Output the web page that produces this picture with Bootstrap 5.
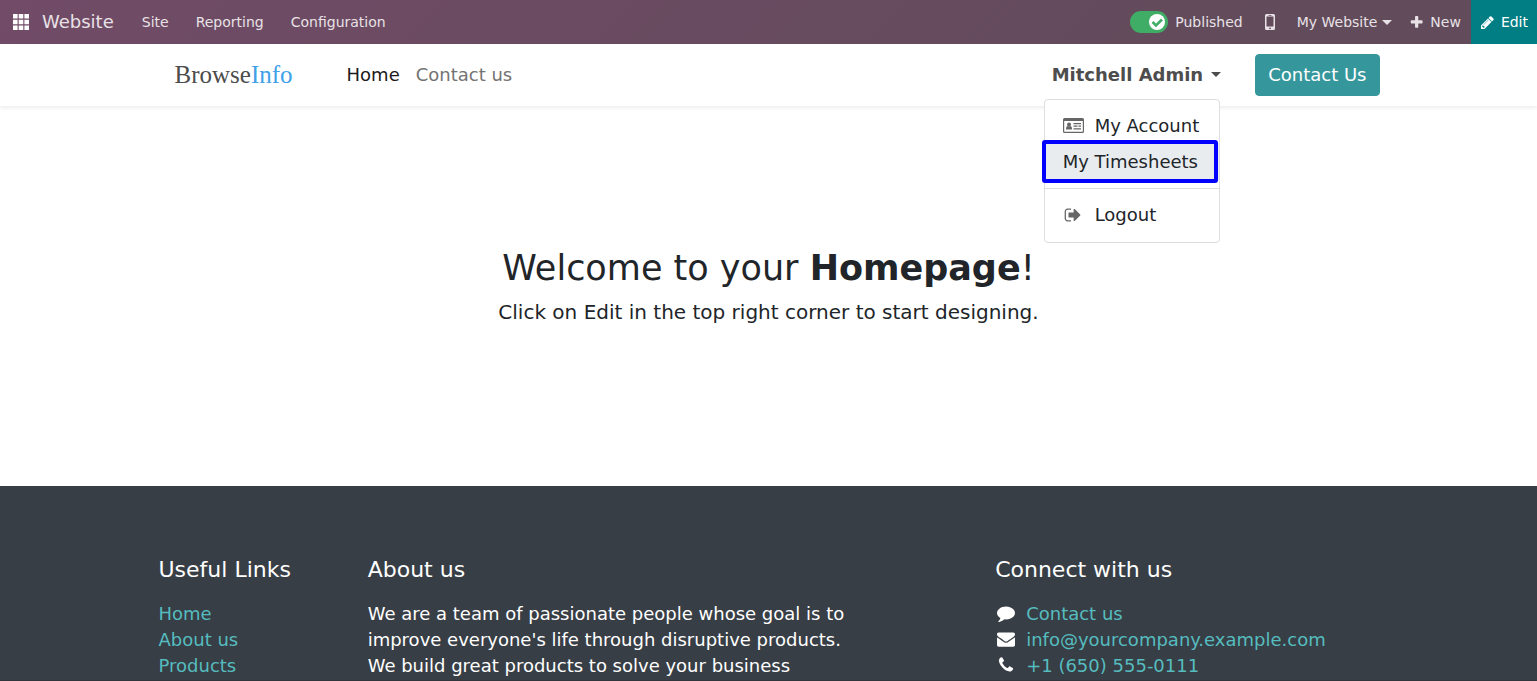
<!DOCTYPE html>
<html lang="en">
<head>
<meta charset="utf-8">
<meta name="viewport" content="width=device-width, initial-scale=1">
<title>Home | My Website</title>
<link href="https://cdn.jsdelivr.net/npm/bootstrap@5.3.0/dist/css/bootstrap.min.css" rel="stylesheet">
<style>
  body { font-family: "DejaVu Sans", sans-serif; font-size: 18px; line-height: 27px; color: #212529; min-height: 100vh; }
  a { text-decoration: none; }
  .fa-icon { fill: currentColor; flex: none; display: block; }
  .site-container { max-width: 1254px; padding-left: 17px; padding-right: 16px; }

  /* Backend bar */
  .systray { height: 44px; padding-left: 13px; font-size: 14px; line-height: 20px; background: linear-gradient(135deg, #714b67, #624b5b 80%); color: #e8e2e6; }
  .systray a, .systray .bar-btn { color: inherit; background: none; border: 0; padding: 0; }
  .systray .app-name { font-size: 18px; margin: 0 28px 0 13px; }
  .systray .sections { gap: 27px; }
  .systray .tools { gap: 18px; }
  .systray .bar-btn { gap: 5px; }
  .systray .apps { color: #fff; }
  .systray .edit-btn { background: #017e84; color: #fff; padding: 0 9px 0 10px; margin-left: -8px; }
  .form-switch .publish-toggle {
    width: 38px; height: 22px; margin: 0 7px 0 0; border: 0; box-shadow: none;
    --knob: url("data:image/svg+xml,%3csvg xmlns='http://www.w3.org/2000/svg' viewBox='0 0 22 22'%3e%3ccircle cx='11' cy='11' r='8' fill='%23fff'/%3e%3cpath d='M6.500 11l3.500 3.500 6-6' fill='none' stroke='%2340ad67' stroke-width='2.600'/%3e%3c/svg%3e");
    --bs-form-switch-bg: var(--knob);
  }
  .form-switch .publish-toggle:checked { background-color: #40ad67; background-image: var(--knob); background-size: 22px 22px; }
  .down-caret { width: 0; height: 0; border: 5px solid transparent; border-top-color: currentColor; border-bottom: 0; }

  /* Website header */
  .site-header { height: 62px; padding-bottom: 1px; box-shadow: 0 2px 4px rgba(0,0,0,.075); position: relative; z-index: 2; }
  .site-header .brand { font-family: "Liberation Serif", serif; font-size: 25px; color: #4c4c4c; margin: 0 54px 0 16px; }
  .site-header .brand span { color: #40a0e8; }
  .site-header .menu-link { color: #737373; }
  .site-header .menu-link.active { color: #1a1a1a; }
  .user-toggle { background: none; border: 0; padding: 0; color: #4d4d4d; font-weight: 700; }
  .cta { --bs-btn-bg: #35979c; --bs-btn-border-color: #35979c; --bs-btn-color: #fff; --bs-btn-hover-bg: #2d8085; --bs-btn-hover-color: #fff;
    --bs-btn-font-size: 18px; --bs-btn-line-height: 26px; --bs-btn-padding-x: 12px; --bs-btn-padding-y: 7px; --bs-btn-border-radius: 4px; }
  .account-box { margin-right: 34px; }
  .user-menu { --bs-dropdown-min-width: 176px; --bs-dropdown-font-size: 18px; --bs-dropdown-padding-y: 8px; --bs-dropdown-border-radius: 4px;
    --bs-dropdown-item-padding-x: 18px; --bs-dropdown-item-padding-y: 4px; --bs-dropdown-border-color: #dedede; --bs-dropdown-link-active-bg: #e9ecef;
    top: 38px; left: -8px; width: 176px; padding-bottom: 10px; }
  .user-menu .dropdown-item { display: flex; align-items: center; gap: 11px; color: #212529; }
  .user-menu .dropdown-item svg { color: #666; }
  .user-menu .picked { position: relative; background: #e9ecef; height: 37px; }
  .user-menu .picked::after { content: ""; position: absolute; inset: -3px 1px -3px -3px; border: 4px solid #00f; border-radius: 3px; }
  .user-menu .dropdown-divider { margin: 8px 0; border-color: #dedede; opacity: 1; }

  /* Page body */
  .hero { height: 380px; padding-top: 138px; }
  .hero h1 { font-size: 35px; line-height: 48px; margin-bottom: 5px; font-weight: 400; }
  .hero p { font-size: 20px; line-height: 30px; }
  .site-footer { background: #383e45; color: #fff; line-height: 26px; border-bottom: 1px solid #30353b; }
  .site-footer .row { --bs-gutter-x: 34px; padding-top: 71px; }
  .site-footer h5 { font-size: 22px; line-height: 26px; margin-bottom: 18px; font-weight: 400; }
  .site-footer a { color: #55bcbf; }
  .site-footer .contact-row { display: flex; align-items: center; gap: 9px; }
  .site-footer .contact-row svg { margin-bottom: 2px; }
</style>
</head>
<body class="d-flex flex-column bg-white">
<nav class="systray d-flex align-items-center flex-shrink-0">
  <a href="#" class="apps" aria-label="Applications">
    <svg class="fa-icon" width="16" height="16" viewBox="0 0 16 16"><path d="M0 0h4.600v4.600H0zM5.700 0h4.600v4.600H5.700zM11.400 0H16v4.600h-4.600zM0 5.700h4.600v4.600H0zM5.700 5.700h4.600v4.600H5.700zM11.400 5.700H16v4.600h-4.600zM0 11.400h4.600V16H0zM5.700 11.400h4.600V16H5.700zM11.400 11.400H16V16h-4.600z"/></svg>
  </a>
  <a href="#" class="app-name">Website</a>
  <div class="sections d-flex me-auto">
    <a href="#">Site</a><a href="#">Reporting</a><a href="#">Configuration</a>
  </div>
  <div class="tools d-flex align-items-center h-100">
    <div class="form-check form-switch d-flex align-items-center p-0 m-0">
      <input class="form-check-input publish-toggle" type="checkbox" role="switch" id="published" checked>
      <label for="published">Published</label>
    </div>
    <button type="button" class="bar-btn px-1" aria-label="Mobile preview">
      <svg class="fa-icon" width="10" height="16" viewBox="0 0 10 16"><path fill-rule="evenodd" d="M1.500 0h7A1.500 1.500 0 0 1 10 1.500v13A1.500 1.500 0 0 1 8.500 16h-7A1.500 1.500 0 0 1 0 14.500v-13A1.500 1.500 0 0 1 1.500 0zM1.500 2.500v10h7v-10zM3.500 1v.7h3V1zM5 13.400a.9.900 0 1 0 0 1.800.9.900 0 0 0 0-1.800z"/></svg>
    </button>
    <button type="button" class="bar-btn d-flex align-items-center">My Website <span class="down-caret"></span></button>
    <button type="button" class="bar-btn d-flex align-items-center">
      <svg class="fa-icon" width="15" height="15" viewBox="100 0 1792 1792"><path d="M1600 736v192q0 40-28 68t-68 28h-416v416q0 40-28 68t-68 28h-192q-40 0-68-28t-28-68v-416h-416q-40 0-68-28t-28-68v-192q0-40 28-68t68-28h416v-416q0-40 28-68t68-28h192q40 0 68 28t28 68v416h416q40 0 68 28t28 68z"/></svg>
      New</button>
    <button type="button" class="bar-btn edit-btn d-flex align-items-center h-100">
      <svg class="fa-icon" width="15" height="15" viewBox="128 0 1792 1792"><path d="M491 1536l91-91-235-235-91 91v107h128v128h107zm523-928q0-22-22-22-10 0-17 7l-542 542q-7 7-7 17 0 22 22 22 10 0 17-7l542-542q7-7 7-17zm-54-192l416 416-832 832h-416v-416zm683 96q0 53-37 90l-166 166-416-416 166-165q36-38 90-38 53 0 91 38l235 234q37 39 37 91z"/></svg>
      Edit</button>
  </div>
</nav>

<header class="site-header bg-white flex-shrink-0">
  <div class="container-fluid site-container h-100 d-flex align-items-center">
    <a href="#" class="brand">Browse<span>Info</span></a>
    <nav class="d-flex gap-3 me-auto">
      <a href="#" class="menu-link active">Home</a>
      <a href="#" class="menu-link">Contact us</a>
    </nav>
    <div class="dropdown account-box">
      <button type="button" class="user-toggle d-flex align-items-center gap-2" aria-expanded="true">Mitchell Admin <span class="down-caret"></span></button>
      <div class="dropdown-menu user-menu show">
        <a class="dropdown-item" href="#">
          <svg class="fa-icon" width="21" height="16" viewBox="0 0 21 16"><path fill-rule="evenodd" d="M1.500 0h18A1.500 1.500 0 0 1 21 1.500v12A1.500 1.500 0 0 1 19.500 15h-18A1.500 1.500 0 0 1 0 13.500v-12A1.500 1.500 0 0 1 1.500 0zM1.200 3v10.300q0 .500.500.500h17.600q.500 0 .500-.500V3zM6 4.400a2 2 0 1 1 0 4 2 2 0 0 1 0-4zM3 11.500q0-3.500 1.600-3.500 1.400 1 2.800 0Q9 8 9 11.500zM10.500 5h7.500v1.200h-7.500zM10.500 7.600h4v1.200h-4zM15.500 7.600H18v1.200h-2.500zM10.500 10.200h7.500v1.200h-7.500z"/></svg>
          My Account</a>
        <a class="dropdown-item picked" href="#">My Timesheets</a>
        <hr class="dropdown-divider">
        <a class="dropdown-item" href="#">
          <svg class="fa-icon" width="21" height="18" viewBox="-100 0 2091 1792"><path d="M704 1440q0 4 1 20t.5 26.500-3 23.500-10 19.500-20.500 6.500h-320q-119 0-203.500-84.500t-84.500-203.500v-704q0-119 84.500-203.500t203.500-84.500h320q13 0 22.500 9.500t9.500 22.500q0 4 1 20t.5 26.500-3 23.500-10 19.500-20.500 6.500h-320q-66 0-113 47t-47 113v704q0 66 47 113t113 47h312l11.500 1 11.500 3 8 5.500 7 9 2 13.500zm928-544q0 26-19 45l-544 544q-19 19-45 19t-45-19-19-45v-288h-448q-26 0-45-19t-19-45v-384q0-26 19-45t45-19h448v-288q0-26 19-45t45-19 45 19l544 544q19 19 19 45z"/></svg>
          Logout</a>
      </div>
    </div>
    <a href="#" class="btn cta">Contact Us</a>
  </div>
</header>

<main class="hero text-center flex-shrink-0">
  <h1>Welcome to your <b>Homepage</b>!</h1>
  <p class="mb-0">Click on Edit in the top right corner to start designing.</p>
</main>

<footer class="site-footer flex-grow-1">
  <div class="container-fluid site-container">
    <div class="row">
      <div class="col-lg-2">
        <h5>Useful Links</h5>
        <ul class="list-unstyled mb-0">
          <li><a href="#">Home</a></li>
          <li><a href="#">About us</a></li>
          <li><a href="#">Products</a></li>
        </ul>
      </div>
      <div class="col-lg-5">
        <h5>About us</h5>
        <p class="mb-0">We are a team of passionate people whose goal is to improve everyone's life through disruptive products. We build great products to solve your business</p>
      </div>
      <div class="col-lg-4 offset-lg-1">
        <h5>Connect with us</h5>
        <ul class="list-unstyled mb-0">
          <li class="contact-row"><svg class="fa-icon" width="22" height="18" viewBox="-200 0 2192 1792"><path d="M1792 896q0 174-120 321.500t-326 233-450 85.500q-70 0-145-8-198 175-460 242-49 14-114 22-17 2-30.500-9t-17.500-29v-1q-3-4-.5-12t2-10 4.500-9.500l6-9 7-8.500 8-9q7-8 31-34.500t34.500-38 31-39.500 32.500-51 27-59 26-76q-157-89-247.500-220t-90.500-281q0-130 71-248.500t191-204.500 286-136.500 348-50.500q244 0 450 85.500t326 233 120 321.500z"/></svg><a href="#">Contact us</a></li>
          <li class="contact-row"><svg class="fa-icon" width="22" height="18" viewBox="-200 0 2192 1792"><path d="M1792 710v794q0 66-47 113t-113 47h-1472q-66 0-113-47t-47-113v-794q44 49 101 87 362 246 497 345 57 42 92.500 65.500t94.500 48 110 24.500h2q51 0 110-24.500t94.500-48 92.500-65.500q170-123 498-345 57-39 100-87zm0-294q0 79-49 151t-122 123q-376 261-468 325-10 7-42.500 31t-54 38.500-52 32.500-57.500 27-50 9h-2q-23 0-50-9t-57.500-27-52-32.500-54-38.500-42.500-31q-91-64-262-182.500t-205-142.500q-62-42-117-115.500t-55-136.500q0-78 41.500-130t118.500-52h1472q65 0 112.500 47t47.500 113z"/></svg><a href="#">info@yourcompany.example.com</a></li>
          <li class="contact-row"><svg class="fa-icon" width="22" height="18" viewBox="-200 0 2192 1792"><path d="M1600 1240q0 27-10 70.500t-21 68.500q-21 50-122 106-94 51-186 51-27 0-53-3.500t-57.500-12.500-47-14.500-55.500-20.500-49-18q-98-35-175-83-127-79-264-216t-216-264q-48-77-83-175-3-9-18-49t-20.500-55.500-14.500-47-12.500-57.500-3.500-53q0-92 51-186 56-101 106-122 25-11 68.500-21t70.500-10q14 0 21 3 18 6 53 76 11 19 30 54t35 63.500 31 53.500q3 4 17.500 25t21.500 35.500 7 28.500q0 20-28.500 50t-62 55-62 53-28.500 46q0 9 5 22.500t8.500 20.500 14 24 11.500 19q76 137 174 235t235 174q2 1 19 11.500t24 14 20.500 8.500 22.500 5q18 0 46-28.500t53-62 55-62 50-28.500q14 0 28.500 7t35.500 21.500 25 17.500q25 15 53.500 31t63.500 35 54 30q70 35 76 53 3 7 3 21z"/></svg><a href="#">+1 (650) 555-0111</a></li>
        </ul>
      </div>
    </div>
  </div>
</footer>
<script src="https://cdn.jsdelivr.net/npm/bootstrap@5.3.0/dist/js/bootstrap.bundle.min.js"></script>
</body>
</html>
